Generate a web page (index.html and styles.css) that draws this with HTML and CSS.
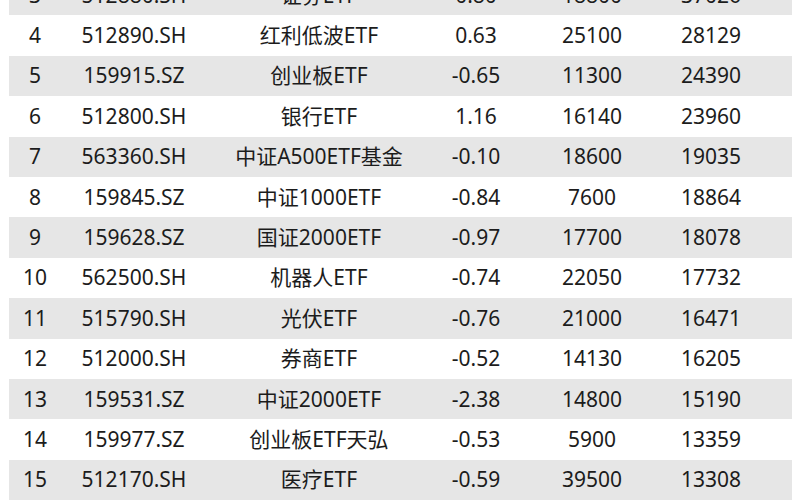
FILE: index.html
```html
<!DOCTYPE html>
<html lang="zh-CN">
<head>
<meta charset="utf-8">
<title>ETF 规模排行</title>
<link rel="stylesheet" href="styles.css">
</head>
<body>
<div class="table">
  <div class="row odd"><span>3</span><span>512880.SH</span><span>证券ETF</span><span>0.80</span><span>18800</span><span>37026</span></div>
  <div class="row"><span>4</span><span>512890.SH</span><span>红利低波ETF</span><span>0.63</span><span>25100</span><span>28129</span></div>
  <div class="row odd"><span>5</span><span>159915.SZ</span><span>创业板ETF</span><span>-0.65</span><span>11300</span><span>24390</span></div>
  <div class="row"><span>6</span><span>512800.SH</span><span>银行ETF</span><span>1.16</span><span>16140</span><span>23960</span></div>
  <div class="row odd"><span>7</span><span>563360.SH</span><span>中证A500ETF基金</span><span>-0.10</span><span>18600</span><span>19035</span></div>
  <div class="row"><span>8</span><span>159845.SZ</span><span>中证1000ETF</span><span>-0.84</span><span>7600</span><span>18864</span></div>
  <div class="row odd"><span>9</span><span>159628.SZ</span><span>国证2000ETF</span><span>-0.97</span><span>17700</span><span>18078</span></div>
  <div class="row"><span>10</span><span>562500.SH</span><span>机器人ETF</span><span>-0.74</span><span>22050</span><span>17732</span></div>
  <div class="row odd"><span>11</span><span>515790.SH</span><span>光伏ETF</span><span>-0.76</span><span>21000</span><span>16471</span></div>
  <div class="row"><span>12</span><span>512000.SH</span><span>券商ETF</span><span>-0.52</span><span>14130</span><span>16205</span></div>
  <div class="row odd"><span>13</span><span>159531.SZ</span><span>中证2000ETF</span><span>-2.38</span><span>14800</span><span>15190</span></div>
  <div class="row"><span>14</span><span>159977.SZ</span><span>创业板ETF天弘</span><span>-0.53</span><span>5900</span><span>13359</span></div>
  <div class="row odd"><span>15</span><span>512170.SH</span><span>医疗ETF</span><span>-0.59</span><span>39500</span><span>13308</span></div>
</div>
</body>
</html>
```
FILE: styles.css
```css
html, body {
  margin: 0;
  padding: 0;
  background: #ffffff;
}
body {
  font-family: "Noto Sans", "Noto Sans CJK SC", sans-serif;
  font-size: 21px;
  color: #1c1c1c;
  overflow: hidden;
  height: 500px;
}
.table {
  margin: -25px 8px 0 9px;
  display: flex;
  flex-direction: column;
}
.row {
  display: grid;
  grid-template-columns: 52px 146px 224px 90px 142px 96px;
  height: 40.4px;
  align-items: center;
  padding-right: 33px;
}
.row.odd {
  background: #e6e6e6;
}
.row span {
  text-align: center;
  white-space: nowrap;
  line-height: 1;
}
```
